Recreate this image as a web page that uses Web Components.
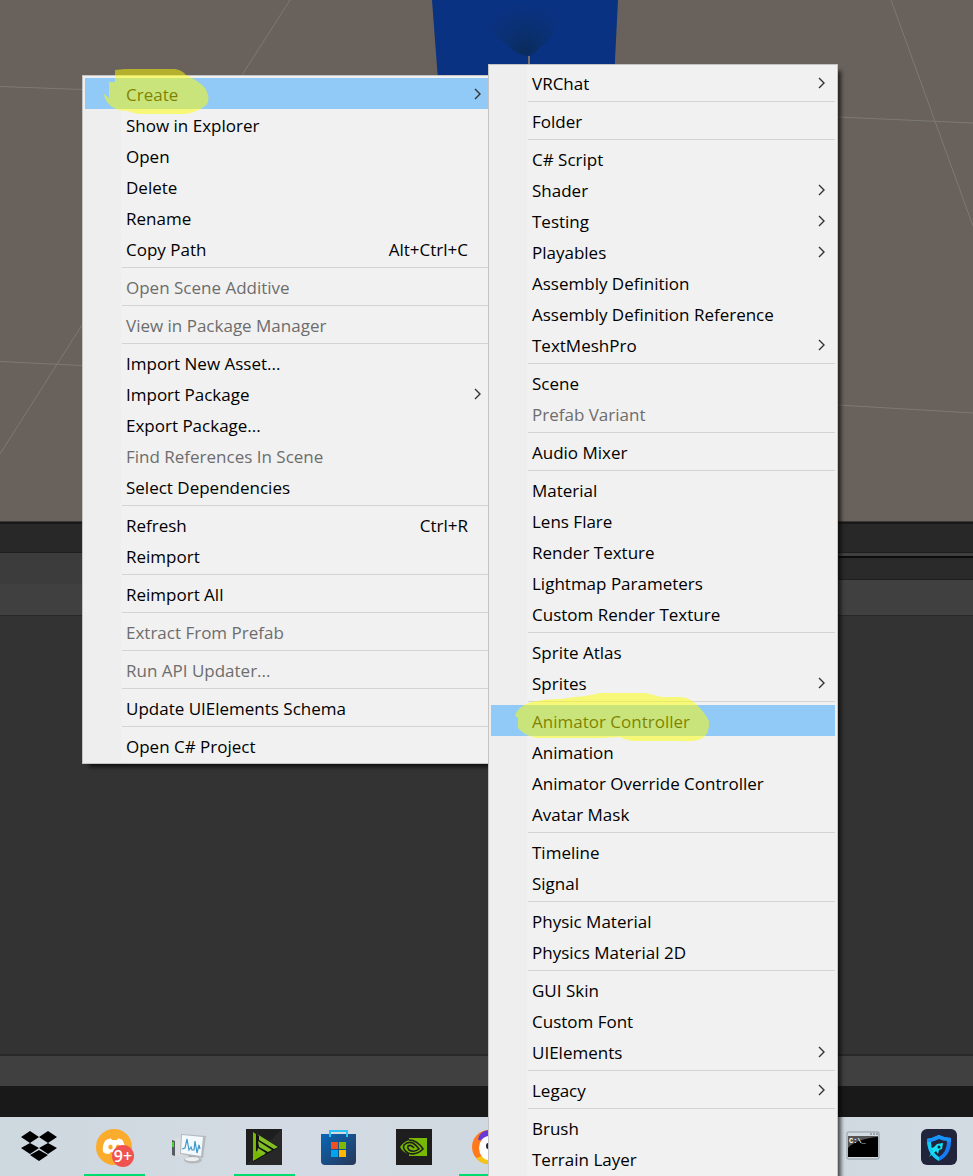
<!DOCTYPE html>
<html lang="en">
<head>
<meta charset="utf-8">
<title>Editor – Assets menu</title>
<style>
html, body { margin: 0; height: 100%; overflow: hidden; }
body { font-family: "Open Sans", "Noto Sans", sans-serif; font-size: 17px; color: #000; }
</style>
</head>
<body>
<editor-desktop>
  <scene-view slot="scene"></scene-view>
  <editor-panels slot="panels"></editor-panels>
  <task-bar slot="taskbar"></task-bar>
  <context-menu slot="menu" label="Assets" id="assets"></context-menu>
  <context-menu slot="submenu" label="Create" id="create"></context-menu>
</editor-desktop>
<script>
const define = (name, html, setup) => {
  const template = document.createElement('template');
  template.innerHTML = html;
  customElements.define(name, class extends HTMLElement {
    connectedCallback() {
      if (this.shadowRoot) return;
      const root = this.attachShadow({ mode: 'open' });
      root.append(template.content.cloneNode(true));
      if (setup) setup(this, root);
    }
  });
};

define('editor-desktop', `
<style>
:host { display: flex; flex-direction: column; position: relative; height: 100vh; overflow: hidden; background: #191919; }
slot[name=scene]::slotted(*) { flex: 521 1 0; min-height: 0; }
slot[name=panels]::slotted(*) { flex: 596 1 0; min-height: 0; }
slot[name=menu]::slotted(*) { position: absolute; left: 82px; top: 75px; width: 412px; z-index: 1; }
slot[name=submenu]::slotted(*) { position: absolute; left: 488px; top: 64px; width: 350px; z-index: 2; }
</style>
<slot name="scene"></slot><slot name="panels"></slot><slot name="taskbar"></slot>
<slot name="menu"></slot><slot name="submenu"></slot>`);

define('scene-view', `
<style>
:host { display: block; background: #69615b; overflow: hidden; }
svg { display: block; width: 100%; height: 100%; }
</style>
<svg viewBox="0 0 973 521" preserveAspectRatio="xMinYMin slice" aria-hidden="true">
  <defs><radialGradient id="g" cx="526" cy="50" r="46" gradientUnits="userSpaceOnUse">
    <stop offset="0" stop-color="#0a2b5c"/><stop offset=".4" stop-color="#0a3070"/><stop offset="1" stop-color="#0a3282"/></radialGradient></defs>
  <g fill="none" stroke="#7c7974" stroke-width="1">
    <path d="M290 0L242 75M82 325L0 454M0 86.500L82 89.500M838 117L973 123M0 361.500L82 365.500M838 405L973 413M891 0L973 226"/>
  </g>
  <path d="M432 0L438 80H615V60L618 0Z" fill="#0a3282"/>
  <path d="M478 4Q482 28 506 44Q516 55 526 56Q534 56 540 47Q560 35 558 4Z" fill="url(#g)"/>
  <path d="M528 56h2v10h-2z" fill="#77706a"/>
</svg>`);

define('editor-panels', `
<style>
:host { display: flex; flex-direction: column; background: #333; }
.edge { height: 1px; background: #393633; border-bottom: 2px solid #191919; }
.tabs { height: 28px; background: #282828; border-bottom: 1px solid #1f1f1f; }
.cols { display: grid; grid-template-columns: 1fr 1fr; height: 62px; border-bottom: 1px solid #282828; }
.tool { height: 31px; background: #3c3c3c; }
.tool.low { background: #404040; }
.gap { height: 3px; background: #404040; border-bottom: 2px solid #0c0c0c; }
.tab2 { height: 21px; background: #2a2a2a; border-bottom: 1px solid #1f1f1f; }
.rest { height: 35px; background: #404040; }
.body { flex: 1; background: #333; }
.path { height: 30px; background: #404040; border-top: 2px solid #282828; }
.status { height: 31px; background: #191919; }
</style>
<div class="edge"></div><div class="tabs"></div>
<div class="cols">
  <div><div class="tool"></div><div class="tool low"></div></div>
  <div><div class="gap"></div><div class="tab2"></div><div class="rest"></div></div>
</div>
<div class="body"></div><div class="path"></div><div class="status"></div>`);

const ARROW = '<svg class="arrow" viewBox="0 0 8 12" width="8" height="12" aria-hidden="true"><path d="M1 1L6 6L1 11" fill="none" stroke="#333" stroke-width="1.400"/></svg>';
define('menu-item', `
<style>
:host { display: block; position: relative; }
button { display: flex; align-items: center; width: 100%; height: 31px; margin: 0; padding: 0 9px 0 41px; border: 0; background: none; color: #000; font: inherit; line-height: 31px; text-align: left; white-space: pre; }
button:disabled { color: #6d6d6d; }
:host([active]) button { background: #91c9f7; }
:host([active]) { z-index: 1; }
.name { flex: 1; }
.name, .key { line-height: 29px; padding-top: 2px; }
.key { padding-right: 14px; }
.arrow { flex: none; }
.mark { position: absolute; pointer-events: none; overflow: visible; left: 0; top: 0; }
</style>
<button role="menuitem" type="button"><span class="name"><slot></slot></span></button>`, (el, root) => {
  const button = root.querySelector('button');
  if (el.hasAttribute('disabled')) button.disabled = true;
  if (el.hasAttribute('shortcut')) {
    const key = document.createElement('span');
    key.className = 'key';
    key.textContent = el.getAttribute('shortcut');
    button.append(key);
  }
  if (el.hasAttribute('submenu')) {
    button.setAttribute('aria-haspopup', 'menu');
    button.insertAdjacentHTML('beforeend', ARROW);
  }
  if (el.hasAttribute('mark')) {
    root.innerHTML += `<svg class="mark" width="1" height="1" aria-hidden="true"><path fill="#ff0" fill-opacity=".5" d="${el.getAttribute('mark')}"/></svg>`;
  }
});

const MARKS = {
  'Create': 'M30 -8L40 -9H90Q97 -8 101 -3Q114 3 120 10Q127 22 120 28Q112 34 101 36H57Q49 36 43 33Q28 33 22 24Q18 17 19 16L24 20V4H30Z',
  'Animator Controller': 'M24 11Q26 2 40 -3Q54 -6 70 -6L84 -8Q98 -9 108 -12H155L170 -8H190Q199 -7 205 -1Q215 9 218 16Q219 30 210 34Q202 37 192 36H143Q134 35 129 32L110 33H45Q32 30 27 23V13Z'
};
// Line syntax: "-" separator, "!" disabled, ">" submenu, "|" shortcut, "*" highlighted
const MENUS = {
  assets: '*Create>\nShow in Explorer\nOpen\nDelete\nRename\nCopy Path|Alt+Ctrl+C\n-\n!Open Scene Additive\n-\n!View in Package Manager\n-\nImport New Asset...\nImport Package>\nExport Package...\n!Find References In Scene\nSelect Dependencies\n-\nRefresh|Ctrl+R\nReimport\n-\nReimport All\n-\n!Extract From Prefab\n-\n!Run API Updater...\n-\nUpdate UIElements Schema\n-\nOpen C# Project',
  create: 'VRChat>\n-\nFolder\n-\nC# Script\nShader>\nTesting>\nPlayables>\nAssembly Definition\nAssembly Definition Reference\nTextMeshPro>\n-\nScene\n!Prefab Variant\n-\nAudio Mixer\n-\nMaterial\nLens Flare\nRender Texture\nLightmap Parameters\nCustom Render Texture\n-\nSprite Atlas\nSprites>\n-\n*Animator Controller\nAnimation\nAnimator Override Controller\nAvatar Mask\n-\nTimeline\nSignal\n-\nPhysic Material\nPhysics Material 2D\n-\nGUI Skin\nCustom Font\nUIElements>\n-\nLegacy>\n-\nBrush\nTerrain Layer'
};
define('context-menu', `
<style>
:host { display: block; box-sizing: border-box; padding: 2px; border: 1px solid #c4c4c4; background: linear-gradient(90deg, #eee 38px, #f1f1f1 38px); box-shadow: 5px 5px 4px -2px rgba(0,0,0,.65); }
hr { height: 1px; margin: 3px 0 3px 37px; border: 0; background: #d4d4d4; }
</style>
<div role="menu"></div>`, (el, root) => {
  const menu = root.querySelector('div');
  menu.setAttribute('aria-label', el.getAttribute('label'));
  for (const line of MENUS[el.id].split('\n')) {
    if (line === '-') { menu.append(document.createElement('hr')); continue; }
    const [text, shortcut] = line.split('|');
    const item = document.createElement('menu-item');
    const name = text.replace(/[!*>]/g, '');
    item.textContent = name;
    if (text[0] === '!') item.setAttribute('disabled', '');
    if (text[0] === '*') { item.setAttribute('active', ''); item.setAttribute('mark', MARKS[name]); }
    if (text.endsWith('>')) item.setAttribute('submenu', '');
    if (shortcut) item.setAttribute('shortcut', shortcut);
    menu.append(item);
  }
});

define('task-icon', `
<style>
:host { display: flex; justify-content: center; box-sizing: border-box; height: 59px; padding-top: 12px; position: relative; }
button { display: block; width: 36px; height: 36px; padding: 0; border: 0; background: none; }
::slotted(svg) { display: block; overflow: visible; }
:host([running])::after { content: ""; position: absolute; left: 8px; right: 6px; bottom: 0; height: 2px; background: #00dc6e; }
</style>
<button type="button"><slot></slot></button>`, (el, root) => {
  root.querySelector('button').setAttribute('aria-label', el.getAttribute('label'));
});

define('task-bar', `
<style>
:host { display: block; flex: none; height: 59px; overflow: hidden; background: linear-gradient(90deg, #ced8df, #d3dae3 30%, #cdd7de 65%, #d2dae2); }
nav { display: grid; grid-template-columns: repeat(13, 75px); padding-left: 1px; }
.cmd { grid-column: 12; } .shield { grid-column: 13; }
.badge { font: 600 16px "Open Sans", "Noto Sans", sans-serif; }
.prompt { font: 700 7px "Liberation Mono", monospace; }
</style>
<nav aria-label="Taskbar">
<task-icon label="Dropbox"><svg width="36" height="36" viewBox="0 0 36 36"><path d="M9 2L18 8L9 14L0 8ZM27 2L36 8L27 14L18 8ZM9 14L18 19L9 25L0 19ZM27 14L36 19L27 25L18 19ZM18 21L27 26L18 32L9 26Z"/></svg></task-icon>
<task-icon label="Discord" running><svg width="36" height="36" viewBox="0 0 36 36"><circle cx="18" cy="18" r="18" fill="#fbac2c"/>
<path d="M9 12Q11 9.500 15 9.500L16 11H21L22 9.500Q26 10 27 12Q30 18 30 24L23 27L21 23H15L13 25Q9 25 7 23Q6 17 9 12Z" fill="#fff"/><ellipse cx="14.500" cy="18" rx="2.200" ry="2.500" fill="#fbaa2b"/><ellipse cx="22" cy="18" rx="2.200" ry="2.500" fill="#fbaa2b"/>
<circle cx="27" cy="27" r="11" fill="#ef5350"/><text class="badge" x="27" y="33" text-anchor="middle" fill="#fff">9+</text></svg></task-icon>
<task-icon label="Resource Monitor"><svg width="36" height="36" viewBox="0 0 36 36"><path d="M1 11L7 8L12 8V27L7 28L1 26Z" fill="#dadddf"/><path d="M1 11L4 12V27L1 26Z" fill="#555c60"/><path d="M1 13H3V18H1Z" fill="#49d236"/><path d="M18 26L26 27L27 31L17 32Z" fill="#9aa0a4"/><ellipse cx="22" cy="31" rx="9" ry="3.500" fill="#b6babd"/><ellipse cx="21" cy="30" rx="7" ry="2" fill="#edf0f1"/><path d="M10 5L35 7L32 29L9 25Z" fill="#b4b9bd"/><path d="M11 6L32 8L30 27L10 24Z" fill="#f3f9fc"/><path d="M11 20L14 19L16 10L18 21L20 18L21 21L23 21L24 12L26 24L28 16L29 20" fill="none" stroke="#3f9acb" stroke-width="1.200"/></svg></task-icon>
<task-icon label="Media Player" running><svg width="36" height="36" viewBox="0 0 36 36"><path d="M0 0H36V36H0Z" fill="#1e1e1e"/><path d="M0 36L36 0V36Z" fill="#282828"/><path d="M7 3L33 18L7 33Z" fill="#101010"/><path d="M7 3L10 5V22L19 25L7 32Z" fill="#76b900"/><path d="M11 5L32 18L28 20L13 11V7ZM12 12L26 21L22 23L13 18ZM12 19L20 24L17 26L11 23Z" fill="#82bd25"/></svg></task-icon>
<task-icon label="Microsoft Store"><svg width="36" height="36" viewBox="0 0 36 36"><defs><linearGradient id="s" x2="1" y2="1"><stop stop-color="#0767b7"/><stop offset="1" stop-color="#293657"/></linearGradient></defs><path d="M0 5H35V32Q35 36 31 36H4Q0 36 0 32Z" fill="url(#s)"/><path d="M9 8V2H26V8" fill="none" stroke="#2cc3f4" stroke-width="2"/><path d="M10 13H17V20H10Z" fill="#f25022"/><path d="M18 13H25V20H18Z" fill="#7fba00"/><path d="M10 21H17V28H10Z" fill="#00a4ef"/><path d="M18 21H25V28H18Z" fill="#ffb900"/></svg></task-icon>
<task-icon label="NVIDIA"><svg width="36" height="36" viewBox="0 0 36 36"><path d="M0 0H36V36H0Z" fill="#1e1e1e"/><path d="M13 9H31V27H13Z" fill="#76b900"/><path d="M4 18Q9 11 15 11Q22 11 27 20Q20 26 14 25Q7 24 4 18Z" fill="#76b900"/><path d="M13 11Q21 11 27 20Q20 27 12 24Q6 20 8 16Q12 12 17 14Q21 17 23 20Q18 24 13 21Q11 19 12 17Q15 15 18 19" fill="none" stroke="#1e1e1e" stroke-width="1.600"/></svg></task-icon>
<task-icon label="Browser" running><svg width="36" height="36" viewBox="0 0 36 36"><circle cx="18" cy="18" r="17" fill="#ff7a1a"/><path d="M7 11Q8 2 18 1V12Z" fill="#6838d8"/><path d="M5 29Q10 35 18 35V25Z" fill="#f3c515"/><ellipse cx="18" cy="19" rx="10" ry="12" fill="#fff"/><ellipse cx="17" cy="17" rx="2" ry="3" fill="#262638"/></svg></task-icon>
<task-icon class="cmd" label="Command Prompt"><svg width="36" height="36" viewBox="0 0 36 36"><path d="M2 3H32Q33 3 33 4V29Q33 30 32 30H2Q1 30 1 29V4Q1 3 2 3Z" fill="#d2dae2" stroke="#8d99a3"/><path d="M2 7H32V28H2Z" fill="#000"/><path d="M2 7H32V8Q10 10 2 19Z" fill="#555"/><path d="M24 5h2m1 0h2m1 0h2" stroke="#64717b"/><text class="prompt" x="3" y="14" fill="#fff">C:\\_</text></svg></task-icon>
<task-icon class="shield" label="Security"><svg width="36" height="36" viewBox="0 0 36 36"><rect width="36" height="36" rx="6" fill="#22243c"/><path d="M18 6Q24 9 30 9Q31 26 18 32Q6 26 6 10Q12 9 18 6Z" fill="#167cf4"/><path d="M6 10Q12 9 18 6V32Q6 26 6 10Z" fill="#12cdf4"/><path d="M6 10Q12 9 18 6Q24 9 30 9V13H6Z" fill="#1693ff"/><path d="M18 10Q22 12 26 12Q26 23 18 28Q10 23 10 13Q14 12 18 10Z" fill="#22243c"/><path d="M22 14L21 20L18 21L17 25L15 22L8 28L12 21L9 20L13 18L16 15Z" fill="#12e2f7"/><circle cx="18" cy="18" r="1.500" fill="#22243c"/></svg></task-icon>
</nav>`);
</script>
</body>
</html>
